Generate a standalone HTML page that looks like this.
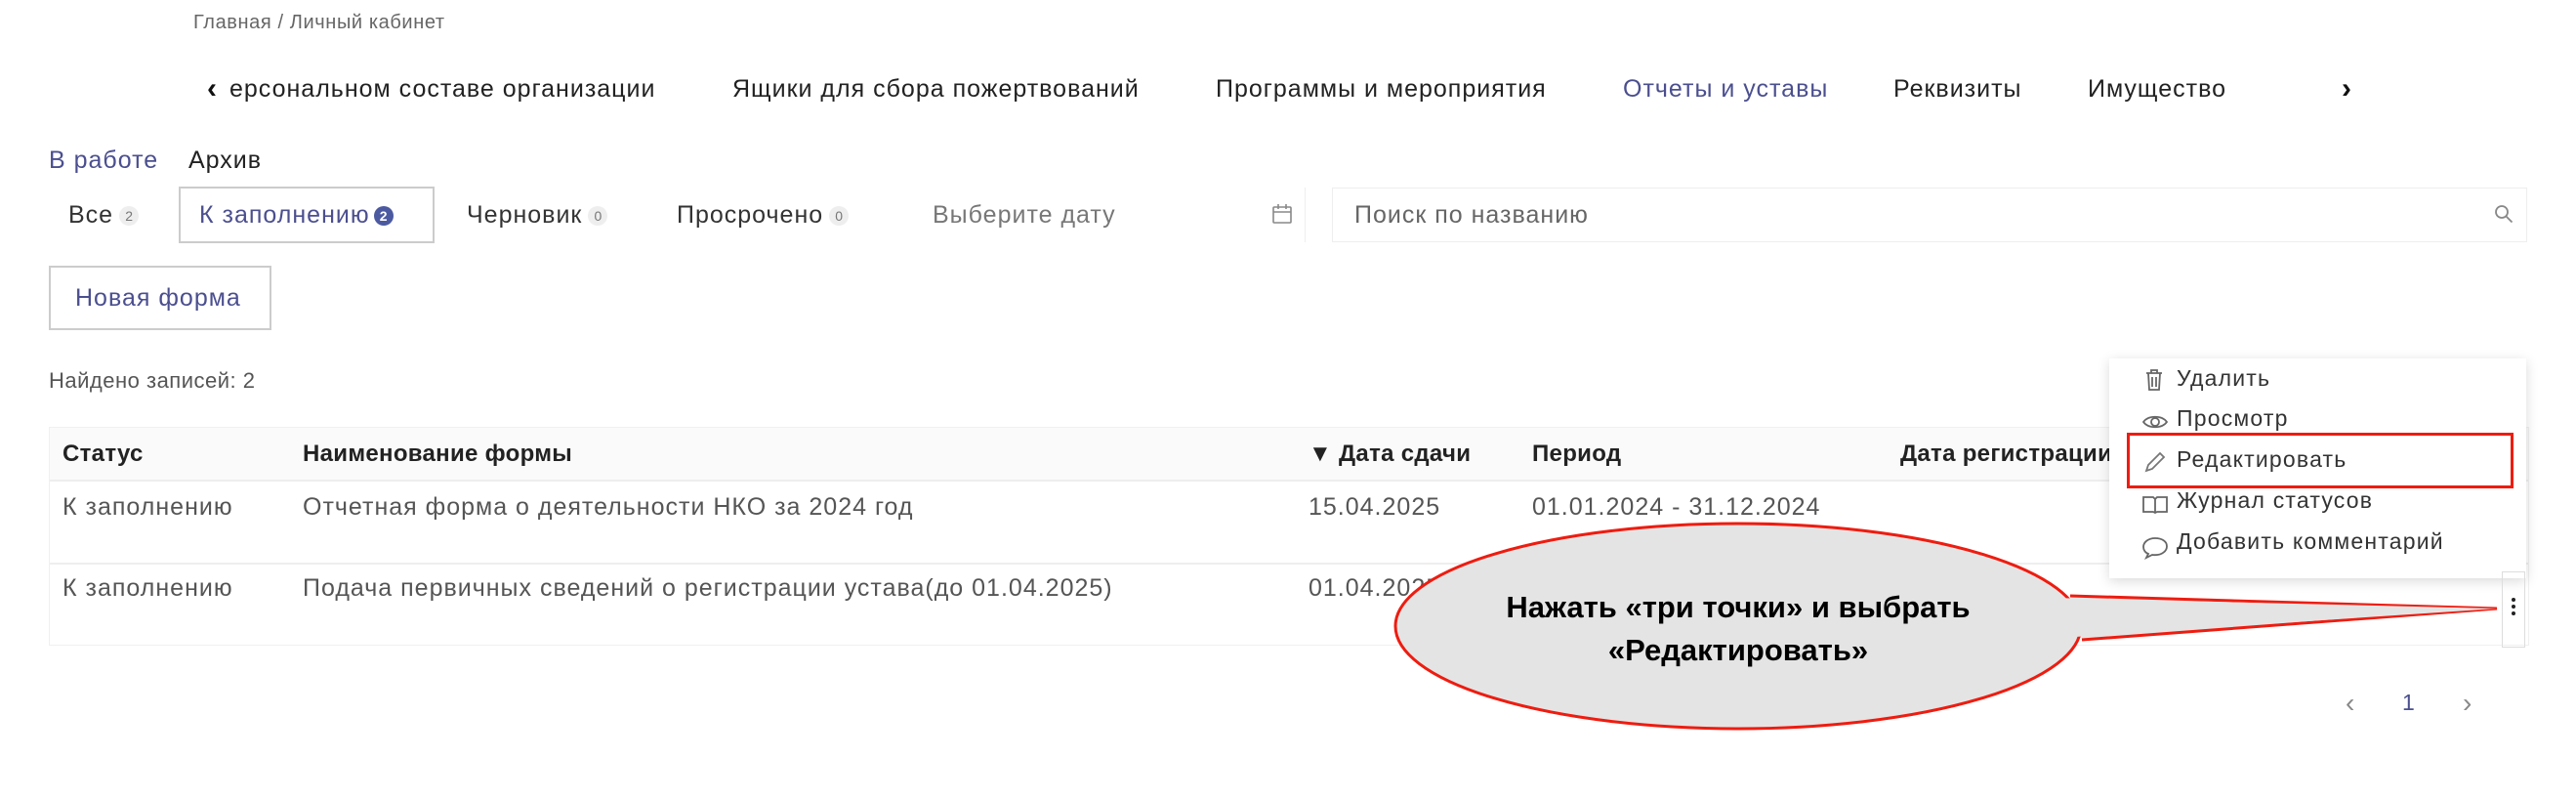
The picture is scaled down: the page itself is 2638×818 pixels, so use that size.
<!DOCTYPE html>
<html><head><meta charset="utf-8"><style>
*{margin:0;padding:0;box-sizing:border-box}
body{width:2638px;height:818px;background:#fff;position:relative;overflow:hidden;font-family:"Liberation Sans","DejaVu Sans",sans-serif;color:#222}
.a{position:absolute;white-space:nowrap}
.t{font-size:25px;letter-spacing:1px;color:#222}
.h{font-size:24px;font-weight:bold;letter-spacing:.3px;color:#222}
.g{color:#555}
.cnt{display:inline-block;min-width:20px;height:20px;border-radius:10px;background:#eee;color:#777;font-size:14px;letter-spacing:0;text-align:center;line-height:20px;margin-left:6px;vertical-align:2px}
.m{font-size:23px;letter-spacing:1.2px;color:#333}
</style></head><body>
<div class="a" style="left:198px;top:12px;font-size:20px;letter-spacing:.6px;color:#666">Главная / Личный кабинет</div>

<div class="a" style="left:212px;top:74px;font-size:30px;color:#111;font-weight:bold">‹</div>
<div class="a t" style="left:235px;top:77px">ерсональном составе организации</div>
<div class="a t" style="left:750px;top:77px">Ящики для сбора пожертвований</div>
<div class="a t" style="left:1245px;top:77px">Программы и мероприятия</div>
<div class="a t" style="left:1662px;top:77px;color:#4b4f8f">Отчеты и уставы</div>
<div class="a t" style="left:1939px;top:77px">Реквизиты</div>
<div class="a t" style="left:2138px;top:77px">Имущество</div>
<div class="a" style="left:2398px;top:74px;font-size:30px;color:#111;font-weight:bold">›</div>

<div class="a t" style="left:50px;top:150px;color:#4b4f8f">В работе</div>
<div class="a t" style="left:193px;top:150px">Архив</div>

<div class="a t" style="left:70px;top:206px;color:#333">Все<span class="cnt">2</span></div>
<div class="a" style="left:183px;top:191px;width:262px;height:58px;border:2px solid #ccc"></div>
<div class="a t" style="left:204px;top:206px;color:#4b4f8f">К заполнению<span class="cnt" style="background:#4b5aa0;color:#fff;font-weight:bold;margin-left:4px">2</span></div>
<div class="a t" style="left:478px;top:206px;color:#333">Черновик<span class="cnt">0</span></div>
<div class="a t" style="left:693px;top:206px;color:#333">Просрочено<span class="cnt">0</span></div>
<div class="a" style="left:935px;top:192px;width:402px;height:56px;border-right:1px solid #eee"></div>
<div class="a t" style="left:955px;top:206px;color:#777">Выберите дату</div>
<svg class="a" style="left:1302px;top:208px" width="22" height="22" viewBox="0 0 22 22" fill="none" stroke="#888" stroke-width="1.6"><rect x="2" y="4" width="18" height="16" rx="1"/><path d="M2 9h18M7 1v5M15 1v5"/></svg>
<div class="a" style="left:1364px;top:192px;width:1224px;height:56px;border:1px solid #eee"></div>
<div class="a t" style="left:1387px;top:206px;color:#666">Поиск по названию</div>
<svg class="a" style="left:2553px;top:208px" width="22" height="22" viewBox="0 0 22 22" fill="none" stroke="#888" stroke-width="1.8"><circle cx="9" cy="9" r="6"/><path d="M13.5 13.5l6 6"/></svg>

<div class="a" style="left:50px;top:272px;width:228px;height:66px;border:2px solid #ccc"></div>
<div class="a t" style="left:77px;top:291px;color:#4b4f8f">Новая форма</div>

<div class="a" style="left:50px;top:377px;font-size:22px;letter-spacing:.5px;color:#555">Найдено записей: 2</div>

<div class="a" style="left:50px;top:437px;width:2540px;height:224px;border:1px solid #f0f0f0"></div>
<div class="a" style="left:51px;top:438px;width:2538px;height:55px;background:#fafafa;border-bottom:2px solid #eee"></div>
<div class="a" style="left:51px;top:576px;width:2538px;height:2px;background:#eee"></div>
<div class="a h" style="left:64px;top:451px">Статус</div>
<div class="a h" style="left:310px;top:451px">Наименование формы</div>
<div class="a h" style="left:1340px;top:451px">▼ Дата сдачи</div>
<div class="a h" style="left:1569px;top:451px">Период</div>
<div class="a h" style="left:1946px;top:451px">Дата регистрации</div>

<div class="a t g" style="left:64px;top:505px">К заполнению</div>
<div class="a t g" style="left:310px;top:505px">Отчетная форма о деятельности НКО за 2024 год</div>
<div class="a t g" style="left:1340px;top:505px">15.04.2025</div>
<div class="a t g" style="left:1569px;top:505px">01.01.2024 - 31.12.2024</div>
<div class="a t g" style="left:64px;top:588px">К заполнению</div>
<div class="a t g" style="left:310px;top:588px">Подача первичных сведений о регистрации устава(до 01.04.2025)</div>
<div class="a t g" style="left:1340px;top:588px">01.04.2025</div>

<div class="a" style="left:2160px;top:367px;width:427px;height:225px;background:#fff;box-shadow:0 3px 12px rgba(0,0,0,.15)"></div>
<svg class="a" style="left:2196px;top:377px" width="20" height="24" viewBox="0 0 20 24" fill="none" stroke="#666" stroke-width="1.8"><path d="M2 5h16M7 5V2h6v3M4 5l1 17h10l1-17M8 9v10M12 9v10"/></svg>
<div class="a m" style="left:2229px;top:374px">Удалить</div>
<svg class="a" style="left:2194px;top:423px" width="26" height="18" viewBox="0 0 26 18" fill="none" stroke="#666" stroke-width="1.8"><path d="M1 9C6 2 20 2 25 9C20 16 6 16 1 9Z"/><circle cx="13" cy="9" r="4"/></svg>
<div class="a m" style="left:2229px;top:415px">Просмотр</div>
<svg class="a" style="left:2196px;top:462px" width="22" height="22" viewBox="0 0 22 22" fill="none" stroke="#777" stroke-width="1.8"><path d="M2 20l2-6L16 2l4 4L8 18z"/></svg>
<div class="a m" style="left:2229px;top:457px">Редактировать</div>
<div class="a" style="left:2178px;top:443px;width:396px;height:57px;border:3px solid #ee1c10"></div>
<svg class="a" style="left:2194px;top:506px" width="26" height="20" viewBox="0 0 26 20" fill="none" stroke="#666" stroke-width="1.8"><path d="M1 3h10l2 2 2-2h10v15H15l-2 1-2-1H1zM13 5v14"/></svg>
<div class="a m" style="left:2229px;top:499px">Журнал статусов</div>
<svg class="a" style="left:2194px;top:549px" width="26" height="24" viewBox="0 0 26 24" fill="none" stroke="#666" stroke-width="1.8"><path d="M13 2C6 2 1 6 1 11c0 3 2 6 5 7l-2 4 6-3c1 0 2 .2 3 .2 7 0 12-4 12-9S20 2 13 2z"/></svg>
<div class="a m" style="left:2229px;top:541px">Добавить комментарий</div>

<div class="a" style="left:2562px;top:585px;width:24px;height:78px;border:1px solid #ddd"></div>
<div class="a" style="left:2572px;top:612px;width:4px;height:4px;background:#222;border-radius:2px;box-shadow:0 7px 0 #222,0 14px 0 #222"></div>

<svg class="a" style="left:0;top:0" width="2638" height="818">
<path d="M2120 610 L2557 623 L2132 655" fill="#e4e4e4" stroke="#ee1c10" stroke-width="3"/>
<ellipse cx="1780" cy="641" rx="351" ry="105" fill="#e4e4e4" stroke="#ee1c10" stroke-width="3"/>
<path d="M2100 612 L2557 623 L2110 653 Z" fill="#e4e4e4"/>
</svg>
<div class="a" style="left:1380px;top:600px;width:800px;text-align:center;font-size:31px;font-weight:bold;color:#000;line-height:44px">Нажать «три точки» и выбрать<br>«Редактировать»</div>

<div class="a" style="left:2402px;top:704px;font-size:28px;color:#888">‹</div>
<div class="a" style="left:2460px;top:706px;font-size:23px;color:#4b4f8f">1</div>
<div class="a" style="left:2522px;top:704px;font-size:28px;color:#888">›</div>
</body></html>
